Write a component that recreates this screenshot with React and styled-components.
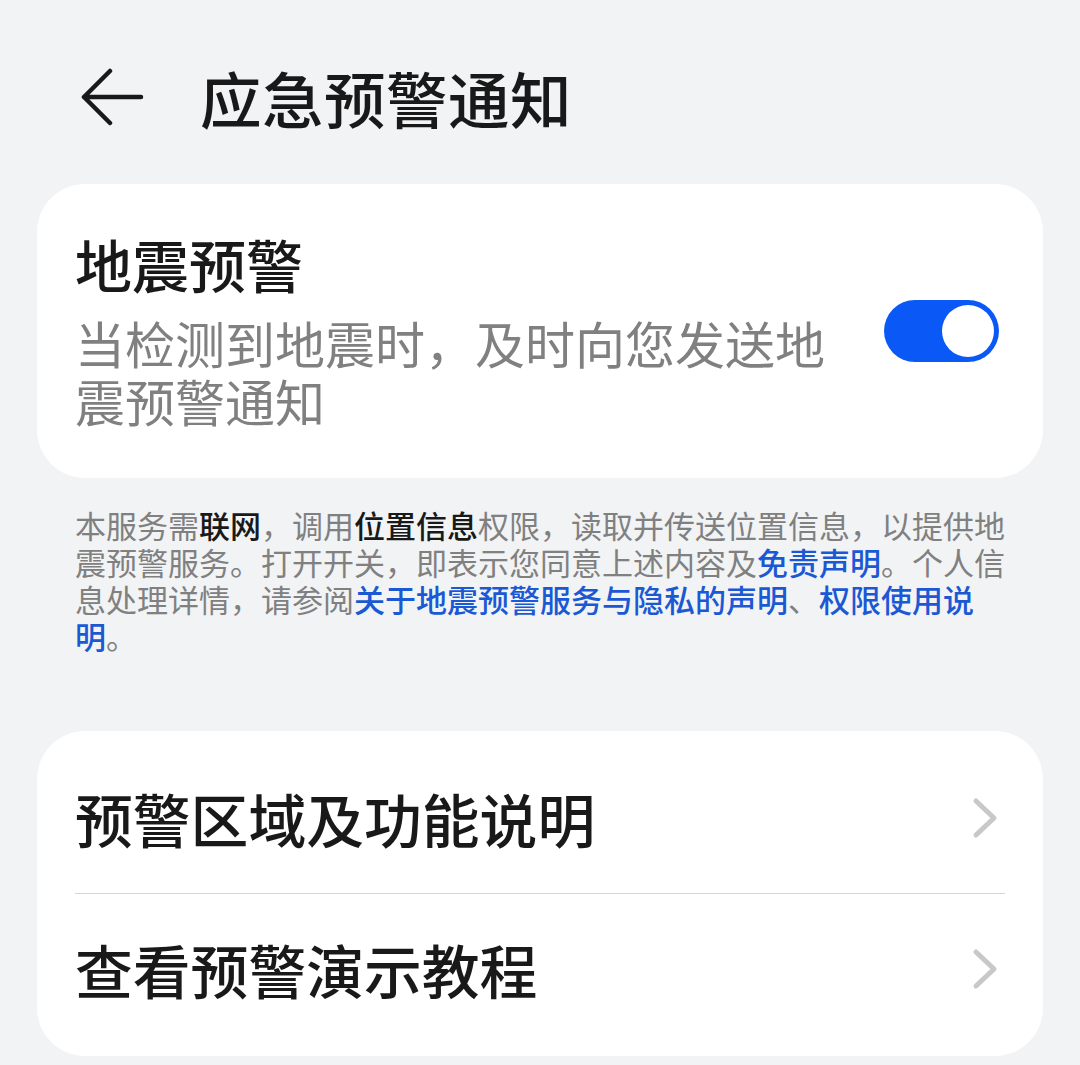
import React, { useState } from 'react';
import styled, { createGlobalStyle } from 'styled-components';

const GlobalStyle = createGlobalStyle`
  html, body {
    margin: 0;
    padding: 0;
    background: #f1f3f5;
  }
  body {
    font-family: "Noto Sans CJK SC", "Noto Sans", sans-serif;
    color: #191919;
  }
`;

const Page = styled.div`
  width: 1080px;
  min-height: 1065px;
  box-sizing: border-box;
  padding: 0 37px;
`;

const Header = styled.header`
  display: flex;
  align-items: center;
  height: 76px;
  padding-top: 60px;
  margin-bottom: 48px;
`;

const BackButton = styled.button`
  display: flex;
  align-items: center;
  justify-content: center;
  width: 66px;
  height: 66px;
  margin-left: 44px;
  padding: 0;
  border: none;
  background: none;
  cursor: pointer;
`;

const Title = styled.h1`
  margin: 0 0 0 53px;
  font-size: 61.5px;
  line-height: 76px;
  font-weight: 500;
  letter-spacing: 0.5px;
`;

const Card = styled.section`
  background: #fff;
  border-radius: 48px;
  padding: ${p => p.$pad || '0'};
`;

const SwitchRow = styled.div`
  display: flex;
  align-items: center;
  gap: 50px;
  padding: 43px 44px 49px 38px;
`;

const TextCol = styled.div`
  flex: 1;
  min-width: 0;
`;

const ItemTitle = styled.div`
  font-size: 57px;
  line-height: 72px;
  font-weight: 500;
  margin-bottom: 14px;
`;

const ItemDesc = styled.div`
  font-size: 50px;
  line-height: 58px;
  color: #808080;
`;

const Toggle = styled.button`
  position: relative;
  flex: none;
  width: 115px;
  height: 62px;
  margin-top: 6px;
  border-radius: 31px;
  border: none;
  padding: 0;
  cursor: pointer;
  background: ${p => (p.$on ? '#0a59f7' : '#d0d2d6')};
  &::after {
    content: '';
    position: absolute;
    top: 5px;
    left: ${p => (p.$on ? '58px' : '5px')};
    width: 52px;
    height: 52px;
    border-radius: 50%;
    background: #fff;
    transition: left 0.2s;
  }
`;

const Note = styled.p`
  width: 942px;
  margin: 28px 0 77px 38px;
  font-size: 31px;
  line-height: 37px;
  color: #808080;
  b {
    color: #191919;
    font-weight: 500;
  }
  a {
    color: #1b58d4;
    font-weight: 500;
    text-decoration: none;
  }
`;

const Row = styled.div`
  display: flex;
  align-items: center;
  justify-content: space-between;
  height: 150px;
  padding: 0 45px 0 38px;
  font-size: 57.8px;
  font-weight: 500;
  cursor: pointer;
`;

const Divider = styled.div`
  height: 1px;
  margin: 0 38px;
  background: #d6d6d6;
`;

const BackIcon = () => (
  <svg width="66" height="66" viewBox="0 0 66 66" fill="none">
    <path
      d="M3 32 L29 6 M3 32 L29 58 M3 32 L60 32"
      stroke="#191919"
      strokeWidth="4.5"
      strokeLinecap="round"
      strokeLinejoin="round"
    />
  </svg>
);

const Chevron = () => (
  <svg width="26" height="42" viewBox="0 0 26 42" fill="none">
    <path
      d="M4 4 L22 21 L4 38"
      stroke="#c8c8c8"
      strokeWidth="5"
      strokeLinecap="round"
      strokeLinejoin="round"
    />
  </svg>
);

const rows = ['预警区域及功能说明', '查看预警演示教程'];

export default function App() {
  const [on, setOn] = useState(true);

  return (
    <>
      <GlobalStyle />
      <Page>
        <Header>
          <BackButton aria-label="返回">
            <BackIcon />
          </BackButton>
          <Title>应急预警通知</Title>
        </Header>

        <Card>
          <SwitchRow>
            <TextCol>
              <ItemTitle>地震预警</ItemTitle>
              <ItemDesc>当检测到地震时，及时向您发送地震预警通知</ItemDesc>
            </TextCol>
            <Toggle $on={on} onClick={() => setOn(v => !v)} aria-label="地震预警" />
          </SwitchRow>
        </Card>

        <Note>
          本服务需<b>联网</b>，调用<b>位置信息</b>权限，读取并传送位置信息，以提供地震预警服务。打开开关，即表示您同意上述内容及
          <a href="#">免责声明</a>。个人信息处理详情，请参阅<a href="#">关于地震预警服务与隐私的声明</a>、
          <a href="#">权限使用说明</a>。
        </Note>

        <Card $pad="12px 0">
          {rows.map((label, i) => (
            <React.Fragment key={label}>
              {i > 0 && <Divider />}
              <Row>
                <span>{label}</span>
                <Chevron />
              </Row>
            </React.Fragment>
          ))}
        </Card>
      </Page>
    </>
  );
}
